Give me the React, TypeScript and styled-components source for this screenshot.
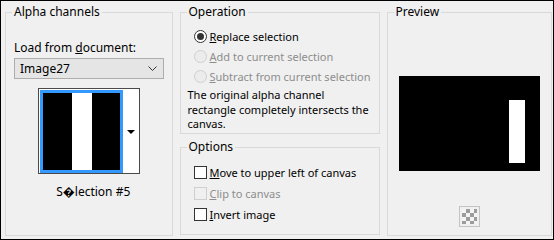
import styled, { createGlobalStyle } from 'styled-components';

const GlobalStyle = createGlobalStyle`
  html, body { margin: 0; padding: 0; background: #fff; }
  body {
    font-family: 'Noto Sans', 'DejaVu Sans', sans-serif;
    font-size: 11px;
    color: #000;
    white-space: nowrap;
  }
`;

const Dialog = styled.div`
  width: 554px;
  height: 240px;
  box-sizing: border-box;
  border: 1px solid #000;
  background: #f0f0f0;
  padding: 3px 1px 0 4px;
  display: flex;
  gap: 7px;
  align-items: flex-start;
`;

const Group = styled.fieldset<{ $w: number; $h: number }>`
  box-sizing: border-box;
  width: ${(p) => p.$w}px;
  height: ${(p) => p.$h}px;
  min-width: 0;
  margin: 0;
  padding: 0 8px;
  border: 1px solid #d9d9d9;
  display: flex;
  flex-direction: column;
`;

const Legend = styled.legend`
  padding: 0 2px;
  margin-left: -2px;
  line-height: 16px;
  font-size: 12px;
`;

const Column = styled.div`
  display: flex;
  flex-direction: column;
  gap: 5px;
`;

const Label = styled.div`
  margin-top: 20px;
  line-height: 16px;
  font-size: 12px;
`;

const Select = styled.div`
  margin-top: 2px;
  height: 21px;
  box-sizing: border-box;
  border: 1px solid #adadad;
  background: #e5e5e5;
  display: flex;
  align-items: center;
  justify-content: space-between;
  padding: 0 6px 0 5px;
  font-size: 12px;
`;

const Thumb = styled.div`
  align-self: center;
  margin: 9px 0 0 1px;
  width: 102px;
  height: 86px;
  box-sizing: border-box;
  border: 1px solid #4a4a4a;
  background: #fff;
  display: flex;
`;

const ThumbImage = styled.div`
  width: 83px;
  margin: 1px 0 0 1px;
  height: 83px;
  box-sizing: border-box;
  border: 3px solid #3399ff;
  background: #000;
  display: flex;
  justify-content: center;
`;

const Stripe = styled.div`
  width: 20px;
  background: #fff;
  margin-left: 1px;
`;

const ThumbButton = styled.div`
  flex: 1;
  display: flex;
  align-items: center;
  justify-content: center;
  padding-top: 2px;
`;

const Arrow = styled.div`
  width: 0;
  height: 0;
  border-left: 4px solid transparent;
  border-right: 4px solid transparent;
  border-top: 4px solid #000;
`;

const Caption = styled.div`
  margin-top: 10px;
  line-height: 16px;
  text-align: center;
  padding-left: 9px;
  font-size: 12px;
`;

const RadioList = styled.div`
  margin-top: 6px;
  display: flex;
  flex-direction: column;
`;

const OptionRow = styled.div<{ $disabled?: boolean; $h: number }>`
  height: ${(p) => p.$h}px;
  display: flex;
  align-items: center;
  gap: 3px;
  padding-left: 5px;
  color: ${(p) => (p.$disabled ? '#8d8d8d' : '#000')};
`;

const Radio = styled.span<{ $checked?: boolean; $disabled?: boolean }>`
  flex: none;
  width: 13px;
  height: 13px;
  box-sizing: border-box;
  border-radius: 50%;
  border: 1px solid ${(p) => (p.$disabled ? '#cfcfcf' : '#333')};
  background: ${(p) => (p.$disabled ? '#ececec' : '#fff')};
  display: grid;
  place-items: center;
  &::after {
    content: '';
    width: 7px;
    height: 7px;
    border-radius: 50%;
    background: #333;
    display: ${(p) => (p.$checked ? 'block' : 'none')};
  }
`;

const Check = styled.span<{ $disabled?: boolean }>`
  flex: none;
  width: 13px;
  height: 13px;
  box-sizing: border-box;
  border: 1px solid ${(p) => (p.$disabled ? '#cfcfcf' : '#333')};
  background: ${(p) => (p.$disabled ? '#f0f0f0' : '#fff')};
`;

const Note = styled.div`
  margin: 2px 0 0 -1px;
  line-height: 14.5px;
`;

const CheckList = styled.div`
  margin-top: 7px;
  display: flex;
  flex-direction: column;
`;

const PreviewCanvas = styled.div`
  align-self: center;
  margin-top: 56px;
  width: 141px;
  height: 95px;
  background: #000;
  display: flex;
  justify-content: flex-end;
  align-items: flex-start;
  padding: 24px 15px 0 0;
  box-sizing: border-box;
`;

const PreviewBar = styled.div`
  width: 16px;
  height: 63px;
  background: #fff;
`;

const Checker = styled.div`
  align-self: center;
  margin-top: 35px;
  width: 21px;
  height: 21px;
  box-sizing: border-box;
  border: 1px solid #c4c4c4;
  padding: 2px;
  &::after {
    content: '';
    display: block;
    width: 15px;
    height: 15px;
    background: repeating-conic-gradient(#9c9c9c 0% 25%, #f4f4f4 0% 50%) 0 0 / 8px 8px;
  }
`;

function Chevron() {
  return (
    <svg width="9" height="6" viewBox="0 0 9 6">
      <polyline points="0.5,0.5 4.5,4.5 8.5,0.5" fill="none" stroke="#333" strokeWidth="1" />
    </svg>
  );
}

export default function App() {
  return (
    <>
      <GlobalStyle />
      <Dialog>
        <Group $w={168} $h={232}>
          <Legend>Alpha channels</Legend>
          <Label>
            Load from <u>d</u>ocument:
          </Label>
          <Select>
            <span>Image27</span>
            <Chevron />
          </Select>
          <Thumb>
            <ThumbImage>
              <Stripe />
            </ThumbImage>
            <ThumbButton>
              <Arrow />
            </ThumbButton>
          </Thumb>
          <Caption>S{'\uFFFD'}lection #5</Caption>
        </Group>

        <Column>
          <Group $w={200} $h={130}>
            <Legend>Operation</Legend>
            <RadioList>
              <OptionRow $h={20}>
                <Radio $checked />
                <span>
                  <u>R</u>eplace selection
                </span>
              </OptionRow>
              <OptionRow $h={20} $disabled>
                <Radio $disabled />
                <span>
                  <u>A</u>dd to current selection
                </span>
              </OptionRow>
              <OptionRow $h={20} $disabled>
                <Radio $disabled />
                <span>
                  <u>S</u>ubtract from current selection
                </span>
              </OptionRow>
            </RadioList>
            <Note>
              The original alpha channel
              <br />
              rectangle completely intersects the
              <br />
              canvas.
            </Note>
          </Group>
          <Group $w={200} $h={96}>
            <Legend>Options</Legend>
            <CheckList>
              <OptionRow $h={21}>
                <Check />
                <span>
                  <u>M</u>ove to upper left of canvas
                </span>
              </OptionRow>
              <OptionRow $h={21} $disabled>
                <Check $disabled />
                <span>
                  <u>C</u>lip to canvas
                </span>
              </OptionRow>
              <OptionRow $h={21}>
                <Check />
                <span>
                  <u>I</u>nvert image
                </span>
              </OptionRow>
            </CheckList>
          </Group>
        </Column>

        <Group $w={166} $h={232}>
          <Legend>Preview</Legend>
          <PreviewCanvas>
            <PreviewBar />
          </PreviewCanvas>
          <Checker />
        </Group>
      </Dialog>
    </>
  );
}
